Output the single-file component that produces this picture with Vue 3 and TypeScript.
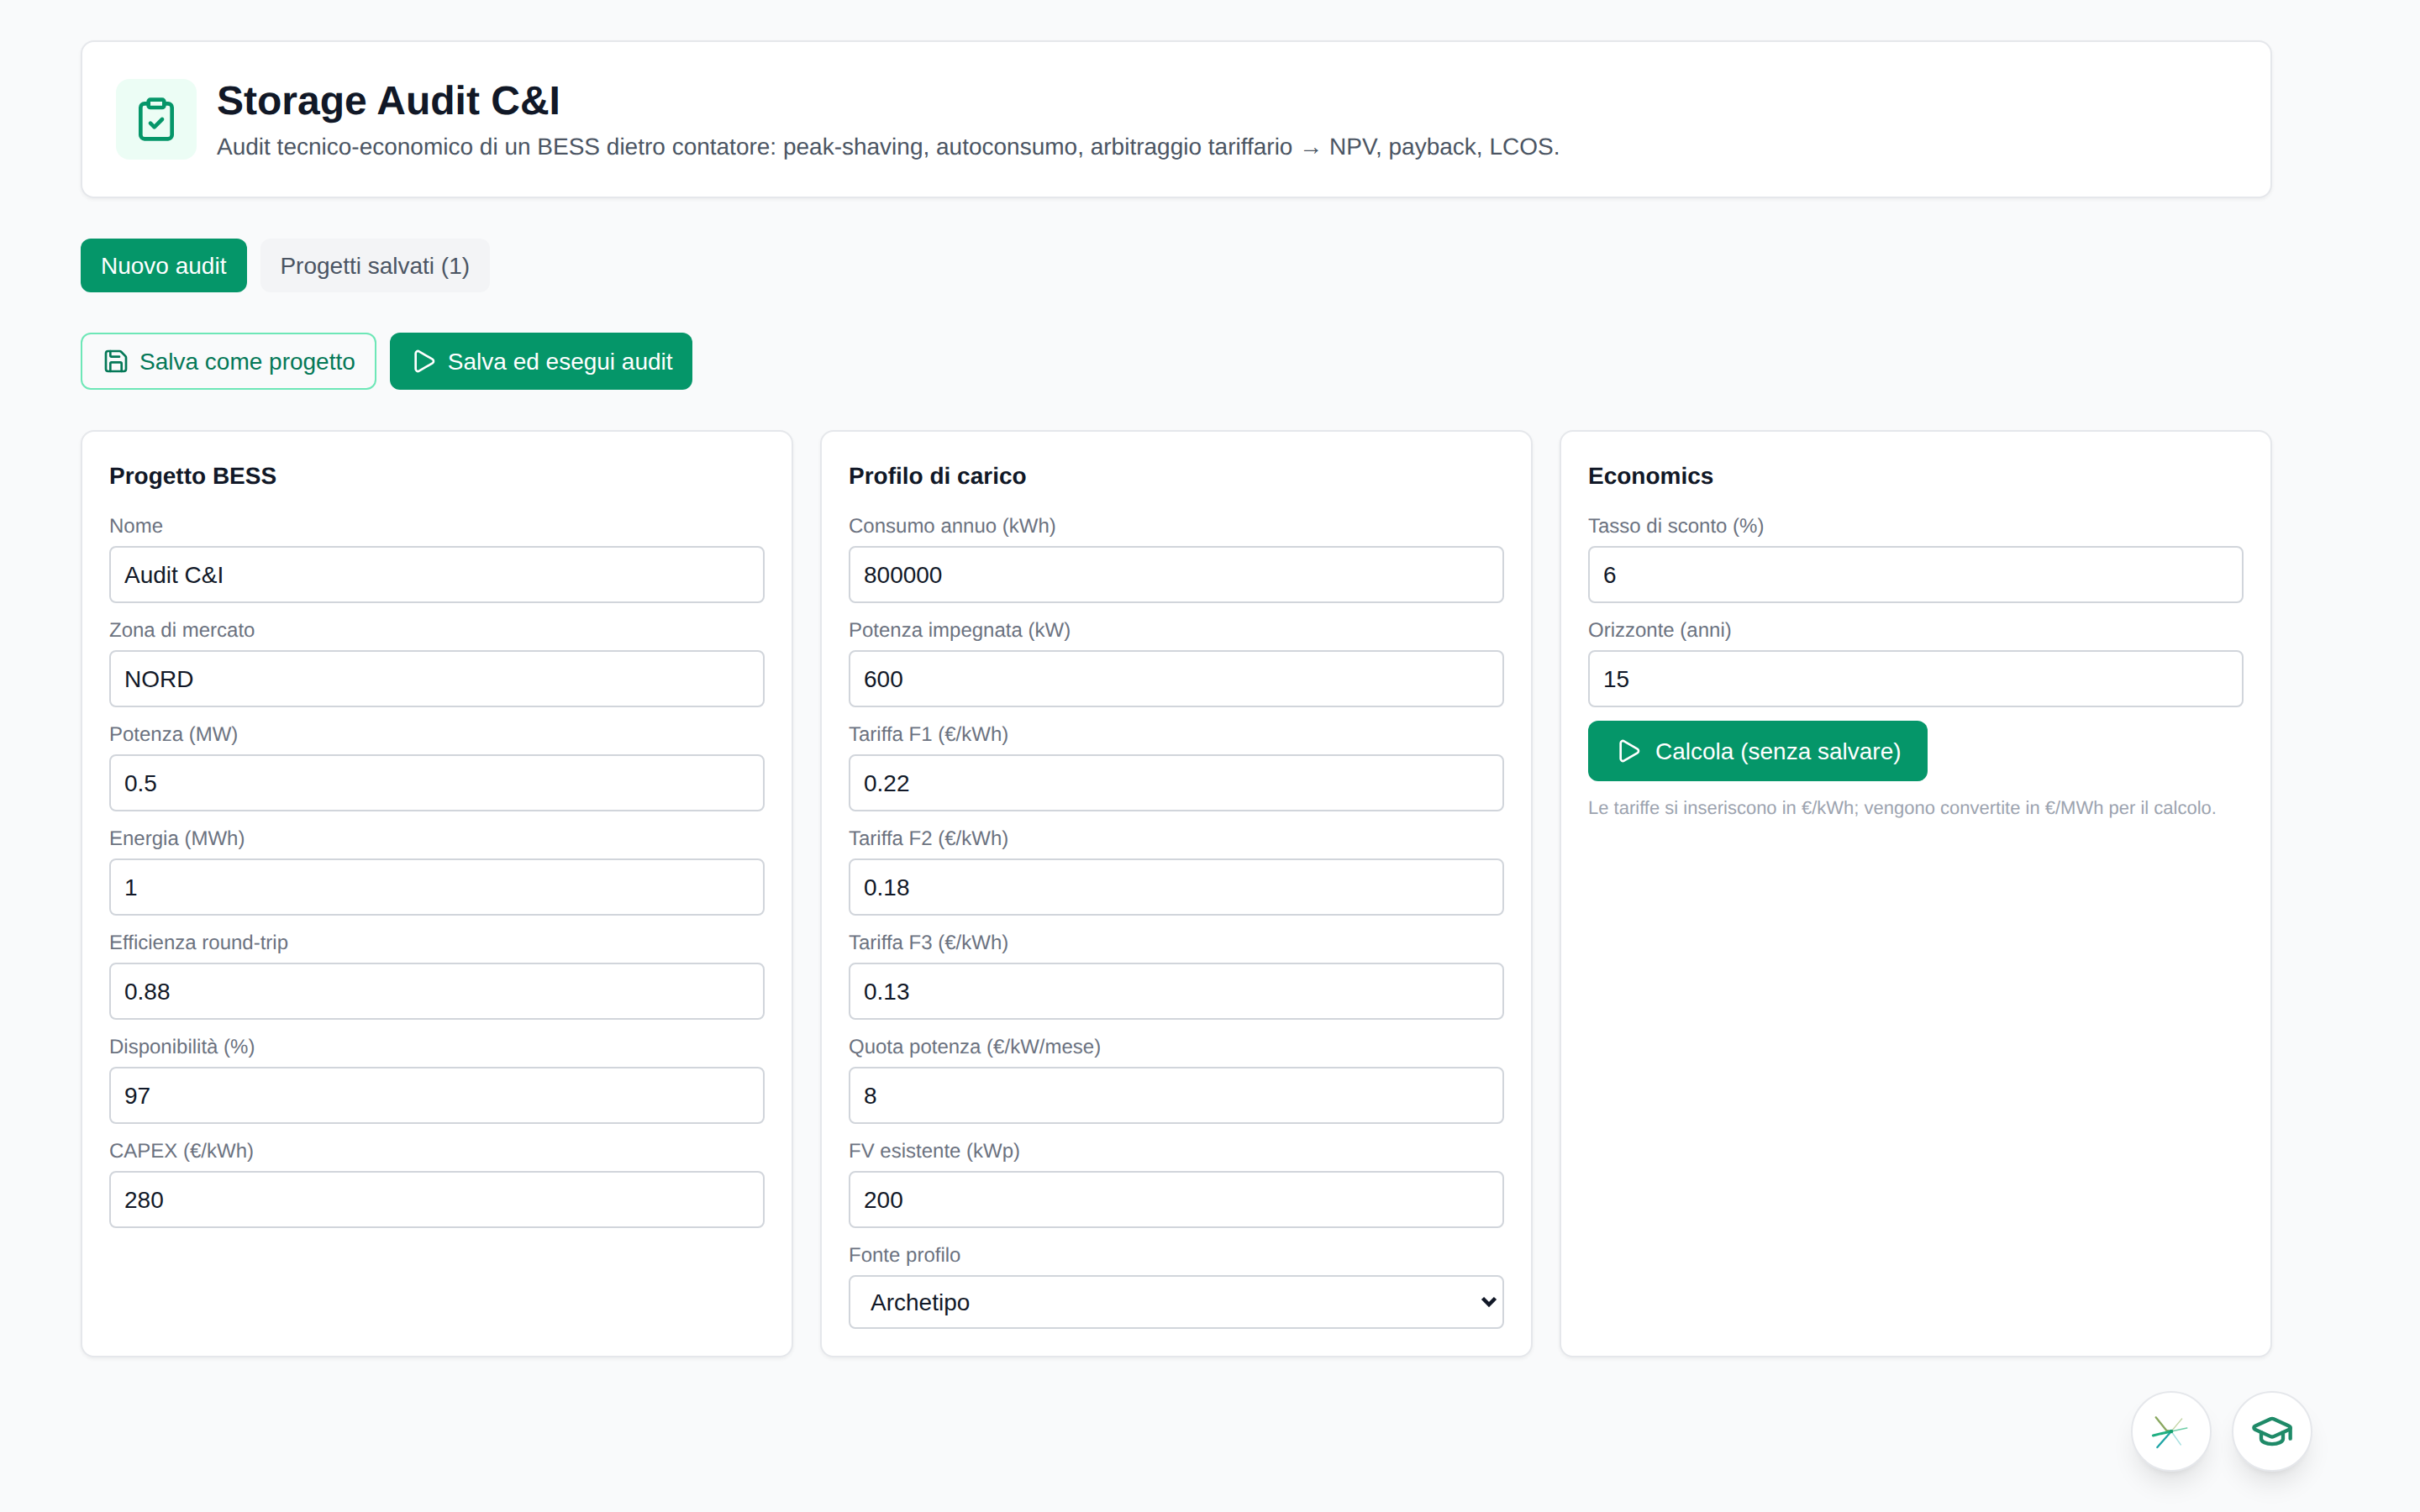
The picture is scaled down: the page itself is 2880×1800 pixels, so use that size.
<script setup lang="ts">
interface Field { label: string; value: string }
const bess: Field[] = [
  { label: 'Nome', value: 'Audit C&I' },
  { label: 'Zona di mercato', value: 'NORD' },
  { label: 'Potenza (MW)', value: '0.5' },
  { label: 'Energia (MWh)', value: '1' },
  { label: 'Efficienza round-trip', value: '0.88' },
  { label: 'Disponibilità (%)', value: '97' },
  { label: 'CAPEX (€/kWh)', value: '280' },
]
const carico: Field[] = [
  { label: 'Consumo annuo (kWh)', value: '800000' },
  { label: 'Potenza impegnata (kW)', value: '600' },
  { label: 'Tariffa F1 (€/kWh)', value: '0.22' },
  { label: 'Tariffa F2 (€/kWh)', value: '0.18' },
  { label: 'Tariffa F3 (€/kWh)', value: '0.13' },
  { label: 'Quota potenza (€/kW/mese)', value: '8' },
  { label: 'FV esistente (kWp)', value: '200' },
]
const economics: Field[] = [
  { label: 'Tasso di sconto (%)', value: '6' },
  { label: 'Orizzonte (anni)', value: '15' },
]
</script>

<template>
  <div class="page">
    <header class="hero">
      <div class="hero-icon">
        <svg width="56" height="56" viewBox="0 0 24 24" fill="none" stroke="currentColor" stroke-width="2" stroke-linecap="round" stroke-linejoin="round">
          <rect x="8" y="2" width="8" height="4" rx="1" />
          <path d="M16 4h2a2 2 0 0 1 2 2v14a2 2 0 0 1-2 2H6a2 2 0 0 1-2-2V6a2 2 0 0 1 2-2h2" />
          <path d="m9 14 2 2 4-4" />
        </svg>
      </div>
      <div>
        <h1>Storage Audit C&amp;I</h1>
        <p>Audit tecnico-economico di un BESS dietro contatore: peak-shaving, autoconsumo, arbitraggio tariffario → NPV, payback, LCOS.</p>
      </div>
    </header>

    <nav class="tabs">
      <button class="tab active">Nuovo audit</button>
      <button class="tab saved">Progetti salvati (1)</button>
    </nav>

    <div class="actions">
      <button class="btn outline">
        <svg width="32" height="32" viewBox="0 0 24 24" fill="none" stroke="currentColor" stroke-width="2" stroke-linecap="round" stroke-linejoin="round">
          <path d="M15.2 3a2 2 0 0 1 1.4.6l3.8 3.8a2 2 0 0 1 .6 1.4V19a2 2 0 0 1-2 2H5a2 2 0 0 1-2-2V5a2 2 0 0 1 2-2z" />
          <path d="M17 21v-7a1 1 0 0 0-1-1H8a1 1 0 0 0-1 1v7" />
          <path d="M7 3v4a1 1 0 0 0 1 1h7" />
        </svg>
        <span class="lbl">Salva come progetto</span>
      </button>
      <button class="btn solid">
        <svg width="32" height="32" viewBox="0 0 24 24" fill="none" stroke="currentColor" stroke-width="2" stroke-linecap="round" stroke-linejoin="round">
          <path d="M5 5a2 2 0 0 1 3.008-1.728l11.997 6.998a2 2 0 0 1 .003 3.458l-12 7A2 2 0 0 1 5 19z" />
        </svg>
        <span class="lbl">Salva ed esegui audit</span>
      </button>
    </div>

    <section class="grid">
      <article class="card">
        <h2>Progetto BESS</h2>
        <div v-for="f in bess" :key="f.label" class="field">
          <label>{{ f.label }}</label>
          <input type="text" :value="f.value" />
        </div>
      </article>

      <article class="card">
        <h2>Profilo di carico</h2>
        <div v-for="f in carico" :key="f.label" class="field">
          <label>{{ f.label }}</label>
          <input type="text" :value="f.value" />
        </div>
        <div class="field">
          <label>Fonte profilo</label>
          <div class="select-wrap">
            <select>
              <option>Archetipo</option>
            </select>
            <svg class="chevron" width="24" height="16" viewBox="0 0 24 16" fill="none" stroke="#111827" stroke-width="4.5">
              <path d="M4.5 3.5 12 11 19.5 3.5" />
            </svg>
          </div>
        </div>
      </article>

      <article class="card">
        <h2>Economics</h2>
        <div v-for="f in economics" :key="f.label" class="field">
          <label>{{ f.label }}</label>
          <input type="text" :value="f.value" />
        </div>
        <button class="calc">
          <svg width="32" height="32" viewBox="0 0 24 24" fill="none" stroke="currentColor" stroke-width="2" stroke-linecap="round" stroke-linejoin="round">
            <path d="M5 5a2 2 0 0 1 3.008-1.728l11.997 6.998a2 2 0 0 1 .003 3.458l-12 7A2 2 0 0 1 5 19z" />
          </svg>
          <span class="lbl">Calcola (senza salvare)</span>
        </button>
        <p class="note">Le tariffe si inseriscono in €/kWh; vengono convertite in €/MWh per il calcolo.</p>
      </article>
    </section>

    <div class="fabs">
      <button class="fab" aria-label="Assistente">
        <svg width="48" height="48" viewBox="240 178 144 144" fill="none" stroke-linecap="round" stroke-linejoin="round">
          <polyline points="312,250 295,247 257,200" stroke="#8aa860" stroke-width="7" />
          <line x1="312" y1="250" x2="350" y2="205" stroke="#c5d6a8" stroke-width="4" />
          <line x1="312" y1="250" x2="368" y2="238" stroke="#6fcfa8" stroke-width="5" />
          <line x1="312" y1="250" x2="346" y2="298" stroke="#a5e0e0" stroke-width="4" />
          <line x1="312" y1="250" x2="262" y2="307" stroke="#20a5a5" stroke-width="7" />
          <polyline points="312,250 275,258 247,265" stroke="#1faf82" stroke-width="9" />
          <circle cx="312" cy="250" r="7" fill="#16a070" />
        </svg>
      </button>
      <button class="fab" aria-label="Guida">
        <svg width="52" height="52" viewBox="0 0 24 24" fill="none" stroke="#1f8a68" stroke-width="2" stroke-linecap="round" stroke-linejoin="round">
          <path d="M21.42 10.922a1 1 0 0 0-.019-1.838L12.83 5.18a2 2 0 0 0-1.66 0L2.6 9.08a1 1 0 0 0 0 1.832l8.57 3.908a2 2 0 0 0 1.66 0z" />
          <path d="M22 10v6" />
          <path d="M6 12.5V16a6 3 0 0 0 12 0v-3.5" />
        </svg>
      </button>
    </div>
  </div>
</template>

<style>
html, body { margin: 0; background: #f9fafb; }
</style>

<style scoped>
.page {
  box-sizing: border-box;
  min-height: 1800px;
  padding: 48px 176px 48px 96px;
  background: #f9fafb;
  font-family: "Liberation Sans", Arial, sans-serif;
  text-rendering: geometricPrecision;
  color: #111827;
  display: flex;
  flex-direction: column;
}
.hero {
  display: flex;
  align-items: center;
  gap: 24px;
  padding: 40px;
  background: #fff;
  border: 2px solid #e5e7eb;
  border-radius: 16px;
  box-shadow: 0 2px 4px rgba(0, 0, 0, .05);
}
.hero-icon {
  width: 96px;
  height: 96px;
  border-radius: 16px;
  background: #ecfdf5;
  color: #059669;
  display: flex;
  align-items: center;
  justify-content: center;
  flex-shrink: 0;
}
h1 { margin: 0; font-size: 48px; line-height: 62px; font-weight: 700; color: #111827; }
.hero p { margin: 3px 0 0; font-size: 28px; line-height: 39px; color: #4b5563; }
.tabs { display: flex; gap: 16px; margin-top: 48px; }
button { font-family: inherit; cursor: pointer; }
.tab {
  border: 0;
  border-radius: 12px;
  padding: 13px 24px 11px;
  font-size: 28px;
  line-height: 40px;
  background: #f3f4f6;
  color: #4b5563;
}
.tab.active { padding-right: 25px; background: #059669; color: #fff; }
.tab.saved { padding-left: 23px; }
.actions { display: flex; gap: 16px; margin-top: 48px; }
.btn {
  display: inline-flex;
  align-items: center;
  gap: 12px;
  padding: 12px 24px;
  border-radius: 12px;
  font-size: 28px;
  line-height: 40px;
  height: 68px;
}
.lbl { padding-top: 2px; }
.btn.outline { padding-right: 23px; border: 2px solid #6ee7b7; background: transparent; color: #047857; }
.btn.solid { gap: 13px; padding-right: 23px; border: 0; background: #059669; color: #fff; }
.grid {
  display: grid;
  grid-template-columns: repeat(3, minmax(0, 1fr));
  gap: 32px;
  margin-top: 48px;
}
.card {
  background: #fff;
  border: 2px solid #e5e7eb;
  border-radius: 16px;
  box-shadow: 0 2px 4px rgba(0, 0, 0, .05);
  padding: 32px;
  display: flex;
  flex-direction: column;
  gap: 16px;
}
h2 { margin: 0 0 8px; padding-top: 1px; font-size: 28px; line-height: 39px; font-weight: 700; color: #111827; }
.field { display: flex; flex-direction: column; }
label { padding-top: 1px; font-size: 24px; line-height: 31px; color: #6b7280; margin-bottom: 8px; }
input, select {
  box-sizing: border-box;
  width: 100%;
  font-family: inherit;
  font-size: 28px;
  line-height: 40px;
  color: #111827;
  background: #fff;
  border: 2px solid #d1d5db;
  border-radius: 8px;
  padding: 13px 16px 11px;
  outline: none;
}
.select-wrap { position: relative; }
select { display: block; height: 64px; padding: 11px 24px 9px; appearance: none; }
.chevron { position: absolute; right: 6px; top: 24px; pointer-events: none; }
.calc {
  align-self: flex-start;
  display: inline-flex;
  align-items: center;
  gap: 16px;
  padding: 16px 31px 16px 32px;
  border: 0;
  border-radius: 12px;
  background: #059669;
  color: #fff;
  font-size: 28px;
  line-height: 40px;
  height: 72px;
}
.note { margin: 0; font-size: 22px; line-height: 32px; color: #9ca3af; }
.fabs {
  position: fixed;
  right: 128px;
  bottom: 48px;
  display: flex;
  gap: 24px;
}
.fab {
  box-sizing: border-box;
  width: 96px;
  height: 96px;
  border-radius: 50%;
  border: 2px solid #e5e7eb;
  background: #fff;
  padding: 0;
  display: flex;
  align-items: center;
  justify-content: center;
  box-shadow: 0 20px 30px -6px rgba(0, 0, 0, .1), 0 8px 12px -8px rgba(0, 0, 0, .1);
}
</style>
